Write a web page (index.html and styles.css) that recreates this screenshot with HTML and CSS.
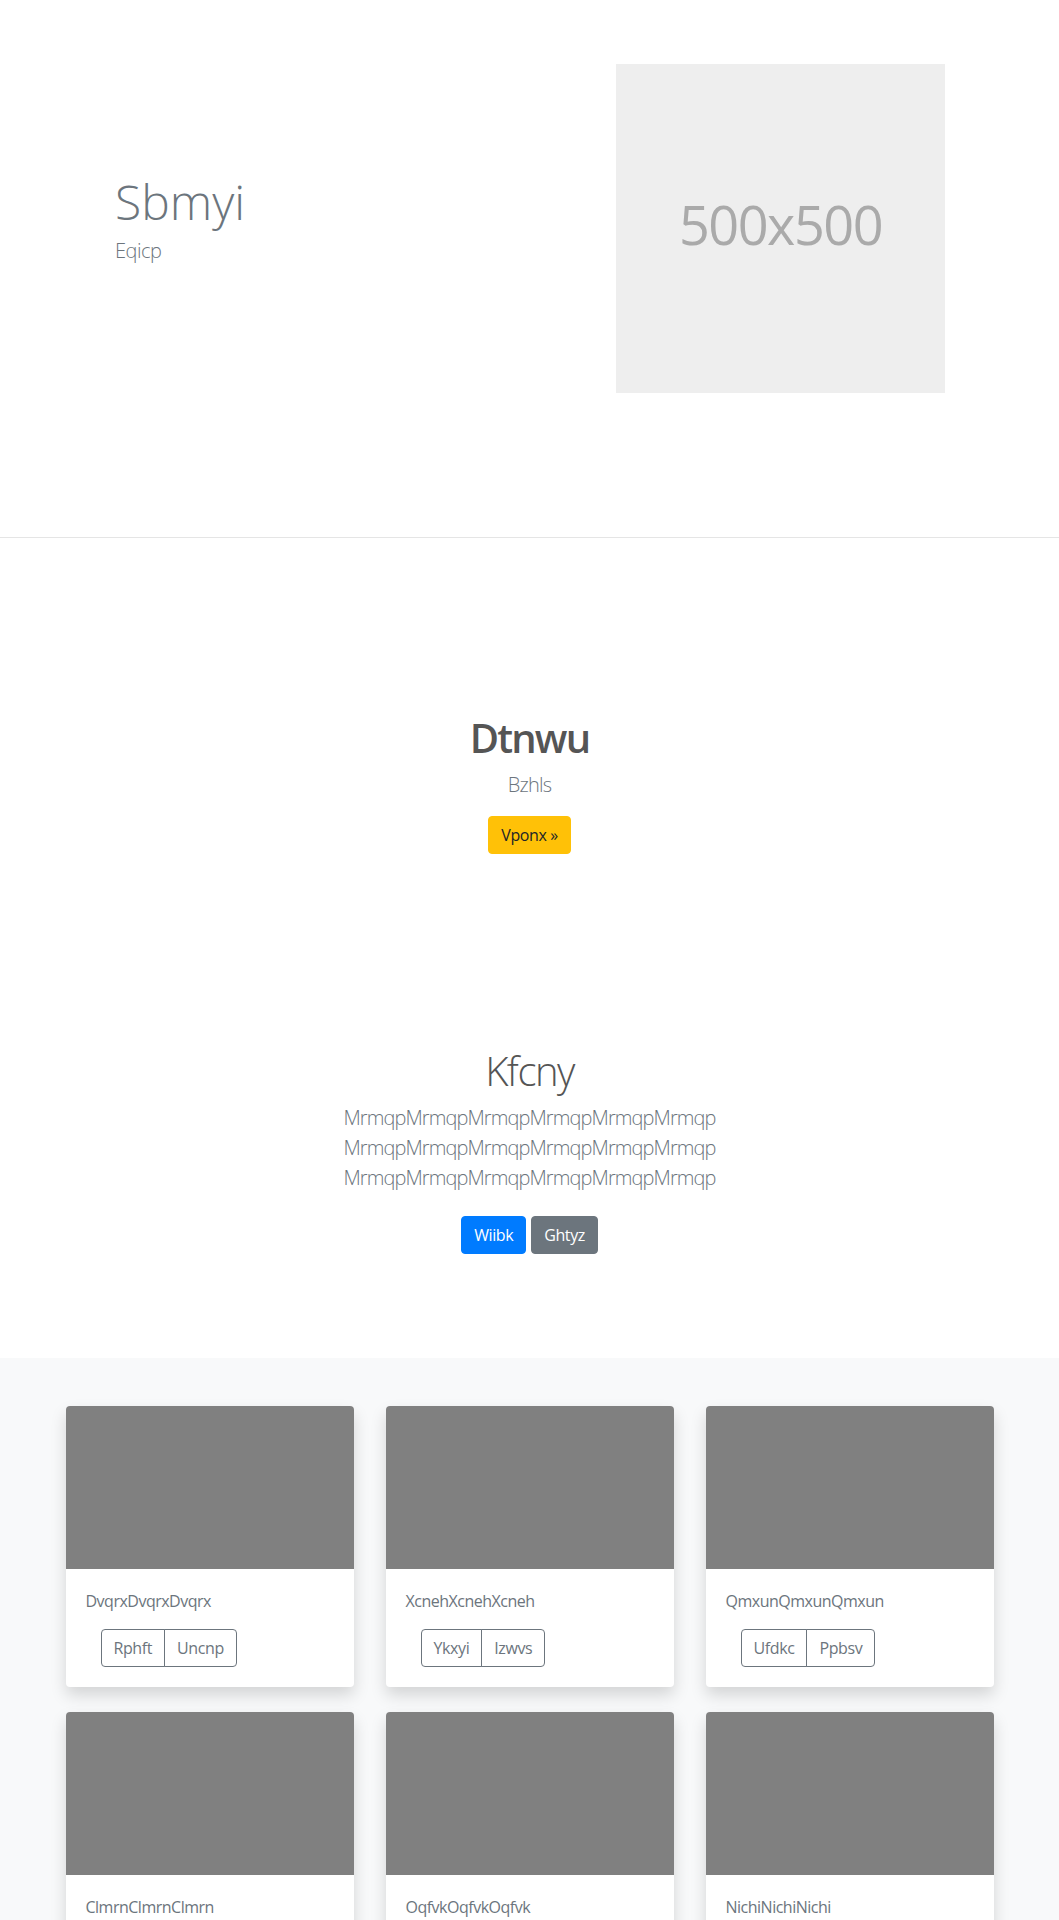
FILE: index.html
```html
<!DOCTYPE html>
<html lang="en">
<head>
<meta charset="utf-8">
<title>Sbmyi</title>
<link rel="stylesheet" href="styles.css">
</head>
<body>
<header class="hero">
  <div class="hero-inner">
    <div class="hero-text">
      <h1 class="hero-title">Sbmyi</h1>
      <p class="lead muted">Eqicp</p>
    </div>
    <div class="placeholder"><span class="placeholder-label">500x500</span></div>
  </div>
</header>

<section class="cta">
  <h2 class="cta-title">Dtnwu</h2>
  <p class="lead muted">Bzhls</p>
  <a class="btn btn-warning" href="#">Vponx &raquo;</a>
</section>

<section class="intro">
  <h2 class="intro-title">Kfcny</h2>
  <p class="lead muted intro-text">MrmqpMrmqpMrmqpMrmqpMrmqpMrmqp MrmqpMrmqpMrmqpMrmqpMrmqpMrmqp MrmqpMrmqpMrmqpMrmqpMrmqpMrmqp</p>
  <div class="btn-row">
    <a class="btn btn-primary" href="#">Wiibk</a>
    <a class="btn btn-secondary" href="#">Ghtyz</a>
  </div>
</section>

<section class="album">
  <div class="card-grid">
    <div class="card">
      <div class="card-img"></div>
      <div class="card-body">
        <p class="card-text">DvqrxDvqrxDvqrx</p>
        <div class="btn-group"><button class="btn btn-outline" type="button">Rphft</button><button class="btn btn-outline" type="button">Uncnp</button></div>
      </div>
    </div>
    <div class="card">
      <div class="card-img"></div>
      <div class="card-body">
        <p class="card-text">XcnehXcnehXcneh</p>
        <div class="btn-group"><button class="btn btn-outline" type="button">Ykxyi</button><button class="btn btn-outline" type="button">Izwvs</button></div>
      </div>
    </div>
    <div class="card">
      <div class="card-img"></div>
      <div class="card-body">
        <p class="card-text">QmxunQmxunQmxun</p>
        <div class="btn-group"><button class="btn btn-outline" type="button">Ufdkc</button><button class="btn btn-outline" type="button">Ppbsv</button></div>
      </div>
    </div>
    <div class="card">
      <div class="card-img"></div>
      <div class="card-body">
        <p class="card-text">ClmrnClmrnClmrn</p>
        <div class="btn-group"><button class="btn btn-outline" type="button">Hqdet</button><button class="btn btn-outline" type="button">Wobal</button></div>
      </div>
    </div>
    <div class="card">
      <div class="card-img"></div>
      <div class="card-body">
        <p class="card-text">OqfvkOqfvkOqfvk</p>
        <div class="btn-group"><button class="btn btn-outline" type="button">Tynle</button><button class="btn btn-outline" type="button">Rsgum</button></div>
      </div>
    </div>
    <div class="card">
      <div class="card-img"></div>
      <div class="card-body">
        <p class="card-text">NichiNichiNichi</p>
        <div class="btn-group"><button class="btn btn-outline" type="button">Zpafo</button><button class="btn btn-outline" type="button">Kbvex</button></div>
      </div>
    </div>
  </div>
</section>
</body>
</html>
```

FILE: styles.css
```css
* { box-sizing: border-box; }

body {
  margin: 0;
  font-family: "Open Sans", "Noto Sans", sans-serif;
  font-size: 16px;
  line-height: 1.5;
  letter-spacing: -0.5px;
  color: #212529;
  background: #fff;
}

.muted { color: #6c757d; }

.lead {
  font-size: 20px;
  font-weight: 300;
  line-height: 30px;
  letter-spacing: -0.8px;
  margin: 0 0 16px;
}

/* Hero */
.hero {
  padding: 64px 0 144px;
  border-bottom: 1px solid #e5e5e5;
}
.hero-inner {
  width: 960px;
  margin: 0 auto;
  padding: 0 64.5px 0 65.5px;
  display: flex;
  align-items: center;
  justify-content: space-between;
}
.hero-title {
  font-size: 48px;
  font-weight: 300;
  line-height: 1.2;
  letter-spacing: 0;
  margin: 0 0 6px;
  color: #6c757d;
}
.hero .lead {
  letter-spacing: -0.5px;
  margin-bottom: 18px;
}
.placeholder {
  width: 329px;
  height: 329px;
  padding-bottom: 10px;
  background: #eee;
  display: flex;
  align-items: center;
  justify-content: center;
}
.placeholder-label {
  font-size: 54px;
  color: #aaa;
  letter-spacing: -1.5px;
  line-height: 1;
}

/* Call to action */
.cta {
  text-align: center;
  padding: 176px 0 87px;
}
.cta-title {
  font-size: 40px;
  font-weight: 600;
  line-height: 1.2;
  letter-spacing: -1.8px;
  margin: 0 0 8px;
  color: #555;
}

/* Intro */
.intro {
  text-align: center;
  padding: 106px 0 104px;
}
.intro-title {
  font-size: 40px;
  font-weight: 300;
  line-height: 1.2;
  letter-spacing: -1.5px;
  margin: 0 0 8px;
  color: #555;
}
.intro-text {
  max-width: 450px;
  margin: 0 auto 23px;
  letter-spacing: -0.9px;
}
.btn-row {
  display: flex;
  justify-content: center;
  gap: 5px;
}

/* Buttons */
.btn {
  display: inline-block;
  padding: 6px 12px;
  font-family: inherit;
  font-size: 16px;
  font-weight: 400;
  line-height: 24px;
  letter-spacing: -0.4px;
  border: 1px solid transparent;
  border-radius: 4px;
  text-decoration: none;
  background: transparent;
  cursor: pointer;
}
.btn-warning { background: #ffc107; border-color: #ffc107; color: #212529; }
.btn-primary { background: #007bff; border-color: #007bff; color: #fff; }
.btn-secondary { background: #6c757d; border-color: #6c757d; color: #fff; }
.btn-outline { color: #6c757d; border-color: #6c757d; }

/* Album */
.album {
  background: #f8f9fa;
  padding: 48px 0;
}
.card-grid {
  width: 928px;
  margin: 0 auto;
  display: grid;
  grid-template-columns: repeat(3, 1fr);
  column-gap: 32px;
  row-gap: 25px;
}
.card {
  background: #fff;
  border-radius: 4px;
  overflow: hidden;
  box-shadow: 0 8px 16px rgba(0, 0, 0, 0.15);
}
.card-img {
  height: 163px;
  background: #808080;
}
.card-body {
  padding: 20px;
}
.card-text {
  margin: 0 0 16px;
  color: #6c757d;
}
.btn-group {
  display: inline-flex;
  margin-left: 15px;
}
.btn-group .btn + .btn {
  margin-left: -1px;
  border-top-left-radius: 0;
  border-bottom-left-radius: 0;
}
.btn-group .btn:first-child {
  border-top-right-radius: 0;
  border-bottom-right-radius: 0;
}
```
